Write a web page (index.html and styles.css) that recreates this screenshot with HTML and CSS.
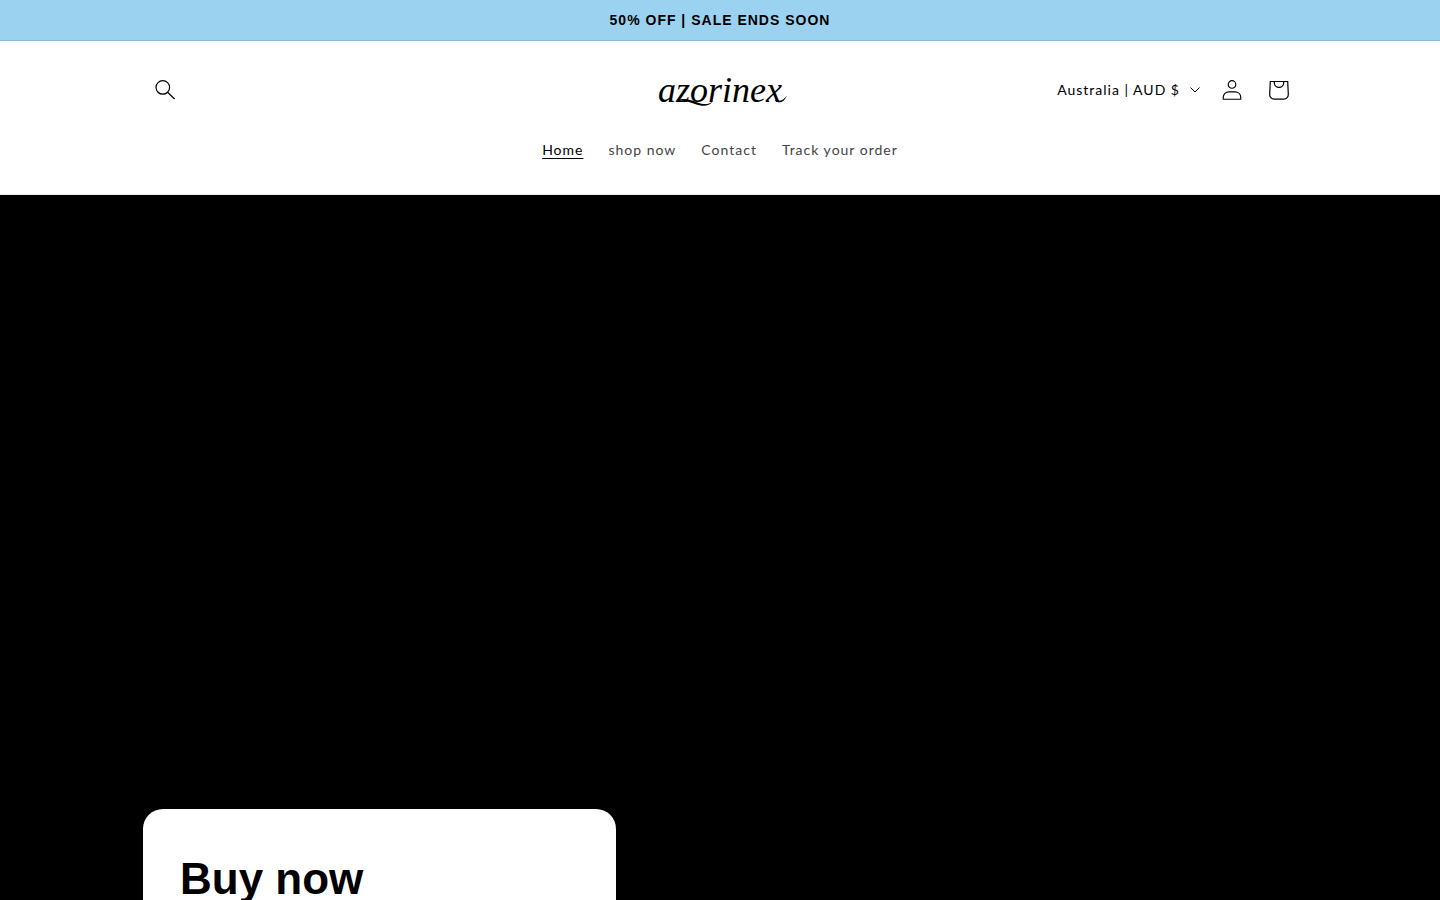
FILE: index.html
```html
<!DOCTYPE html>
<html lang="en">
<head>
	<meta charset="utf-8">
	<meta name="viewport" content="width=device-width, initial-scale=1">
	<title>azorinex</title>
	<link rel="stylesheet" href="styles.css">
</head>
<body>
<div class="announcement">
	<p class="announcement-text">50% OFF | SALE ENDS SOON</p>
</div>

<header class="header">
	<div class="header-top">
		<button class="icon-button" type="button" aria-label="Search">
			<svg width="20" height="20" viewBox="0 0 20 20" fill="none" stroke="currentColor" stroke-width="1.2">
				<circle cx="7.8" cy="7.4" r="6.8"/>
				<path d="M12.6 12.3l7 6.7"/>
			</svg>
		</button>

		<a class="logo" href="#">
			azorinex
			<svg class="logo-swash" width="130" height="34" viewBox="0 0 130 34" fill="currentColor">
				<path d="M19 25.5c7-3 13-1 19 1.500 6 2.400 12 3.500 17-1-4 6-11 5.500-18 3-6-2.200-11-4-18-3.500z"/>
				<path d="M117 24.500c4 2.500 8 1.500 12-4-3 7-8 8.500-12 5z"/>
			</svg>
		</a>

		<div class="header-tools">
			<button class="country" type="button">
				Australia | AUD $
				<svg width="10" height="6" viewBox="0 0 10 6" fill="none" stroke="currentColor">
					<path d="M.5.5L5 5 9.5.5"/>
				</svg>
			</button>
			<a class="icon-button" href="#" aria-label="Log in">
				<svg width="20" height="20" viewBox="0 0 20 21" fill="none" stroke="currentColor" stroke-width="1.2">
					<circle cx="10" cy="4.7" r="4"/>
					<path d="M.8 20.2v-1.700c0-3.700 2.700-6 6-6h6.400c3.300 0 6 2.300 6 6v1.700z"/>
				</svg>
			</a>
			<a class="icon-button" href="#" aria-label="Cart">
				<svg width="20" height="20" viewBox="0 0 20 20" fill="none" stroke="currentColor" stroke-width="1.2">
					<path d="M1.3 1.5h17.400l.6 12.500c.2 3-1.800 5.200-4.500 5.200H5.200c-2.700 0-4.700-2.200-4.500-5.200z"/>
					<path d="M5.3 1.5v1.200a4.700 4.700 0 0 0 9.400 0V1.5"/>
				</svg>
			</a>
		</div>
	</div>

	<nav class="menu">
		<a class="menu-link active" href="#">Home</a>
		<a class="menu-link" href="#">shop now</a>
		<a class="menu-link" href="#">Contact</a>
		<a class="menu-link" href="#">Track your order</a>
	</nav>
</header>

<main class="banner">
	<section class="banner-box">
		<h1 class="banner-title">Buy now</h1>
	</section>
</main>
</body>
</html>
```

FILE: styles.css
```css
*{
	box-sizing: border-box;
}

body{
	margin: 0;
	background-color: white;
	color: black;
	font-family: Lato, "Liberation Sans", sans-serif;
	font-size: 14px;
	letter-spacing: 1px;
}

a{
	color: inherit;
	text-decoration: none;
}

button{
	padding: 0;
	border: 0;
	background: none;
	color: inherit;
	font: inherit;
	letter-spacing: inherit;
	cursor: pointer;
}

/* announcement bar */
.announcement{
	padding: 9px 16px;
	border-bottom: 1px solid #8abdd8;
	background-color: #9bd2ef;
	text-align: center;
}

.announcement-text{
	margin: 0;
	font: bold 14px/22px "Liberation Sans", Arial, sans-serif;
}

/* header */
.header{
	padding: 20px 48px;
	border-bottom: 1px solid #ebebeb;
}

.header-top{
	display: grid;
	grid-template-columns: 1fr auto 1fr;
	align-items: center;
	max-width: 1158px;
	height: 58px;
	margin: 0 auto;
}

.icon-button{
	display: flex;
	align-items: center;
	justify-content: center;
	width: 47px;
	height: 44px;
}

.logo{
	position: relative;
	font: italic 36px/44px "Liberation Serif", "Times New Roman", serif;
	letter-spacing: 0;
}

/* tails under the z and after the x */
.logo-swash{
	position: absolute;
	top: 7px;
	left: 0;
}

.header-tools{
	display: flex;
	align-items: center;
	justify-content: flex-end;
	margin-right: -3px;
}

.country{
	display: flex;
	align-items: center;
	gap: 10px;
	margin-right: 8px;
	line-height: 22px;
}

.menu{
	display: flex;
	justify-content: center;
	gap: 25px;
	padding: 20px 0 13px;
	line-height: 22px;
}

.menu-link{
	color: #444;
}

.menu-link.active{
	color: black;
	text-decoration: underline;
	text-underline-offset: 3px;
}

/* banner */
.banner{
	padding: 614px 48px 0;
	background-color: black;
}

.banner-box{
	width: 473px;
	margin-left: calc((100% - 1154px) / 2);
	padding: 44px 37px;
	border-radius: 20px 20px 0 0;
	background-color: white;
}

.banner-title{
	margin: 0;
	font: bold 44px/52px "Liberation Sans", Arial, sans-serif;
	letter-spacing: 0;
}
```
